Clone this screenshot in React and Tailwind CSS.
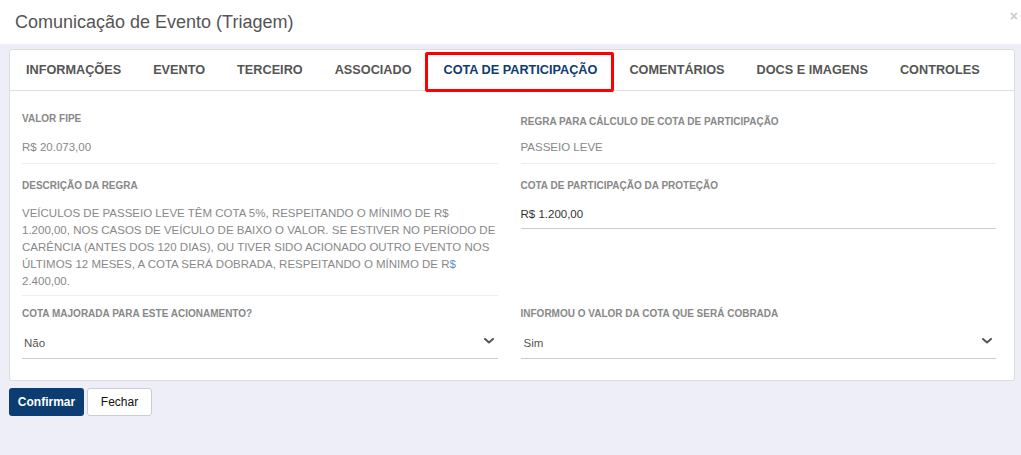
import React from "react";

const Chevron = () => (
  <svg width="10" height="6" viewBox="0 0 10 6" className="shrink-0">
    <path d="M1 1 L5 4.5 L9 1" fill="none" stroke="#555" strokeWidth="2" strokeLinecap="round" strokeLinejoin="round" />
  </svg>
);

const tabs = ["INFORMAÇÕES", "EVENTO", "TERCEIRO", "ASSOCIADO", "COTA DE PARTICIPAÇÃO", "COMENTÁRIOS", "DOCS E IMAGENS", "CONTROLES"];

const Label = ({ children, className = "" }) => (
  <div className={"text-[10px] leading-[12px] font-bold text-[#888] uppercase " + className}>{children}</div>
);

export default function App() {
  return (
    <div className="w-full h-[455px] bg-[#eeeef8] overflow-hidden" style={{ fontFamily: '"Liberation Sans", Arial, sans-serif' }}>
      <div className="relative h-[44px] bg-white flex items-center pl-[15px]">
        <span className="text-[18px] text-[#555] leading-none">Comunicação de Evento (Triagem)</span>
        <span className="absolute right-[3px] top-[6px] text-[14px] font-bold text-[#ccc]">×</span>
      </div>
      <div className="px-[9px] pt-[5px]">
        <div className="w-[1006px] bg-white border border-[#ddd] rounded-[3px]">
          <div className="h-[41px] border-b border-[#ddd] flex items-center">
            {tabs.map((t, i) => (
              <div key={t} className={"relative h-full flex items-center pt-[2px] px-[16px] text-[12.7px] font-bold " + (i === 4 ? "text-[#0d3b74]" : "text-[#555]")}>
                {t}
                {i === 4 && <div className="absolute left-[-3px] right-[-1px] top-[2px] bottom-[-2px] border-[3px] border-[#f00] rounded-[2px]" />}
              </div>
            ))}
          </div>
          <div className="grid grid-cols-2 gap-x-[23px] pl-[12px] pr-[18px]">
            {/* Row 1 */}
            <div className="pt-[22px]">
              <Label>Valor FIPE</Label>
              <div className="mt-[14px] text-[11.5px] leading-[17px] text-[#888] pb-[7px] border-b border-[#eee]">R$ 20.073,00</div>
            </div>
            <div className="pt-[25px]">
              <Label>Regra para cálculo de cota de participação</Label>
              <div className="mt-[11px] text-[11.5px] leading-[17px] text-[#888] pb-[7px] border-b border-[#eee]">PASSEIO LEVE</div>
            </div>
            {/* Row 2 */}
            <div className="pt-[16px]">
              <Label>Descrição da regra</Label>
              <div className="mt-[13px] text-[11.5px] leading-[17px] text-[#888] pb-[5px] border-b border-[#eee] whitespace-nowrap">
                VEÍCULOS DE PASSEIO LEVE TÊM COTA 5%, RESPEITANDO O MÍNIMO DE R$<br />
                1.200,00, NOS CASOS DE VEÍCULO DE BAIXO O VALOR. SE ESTIVER NO PERÍODO DE<br />
                CARÊNCIA (ANTES DOS 120 DIAS), OU TIVER SIDO ACIONADO OUTRO EVENTO NOS<br />
                ÚLTIMOS 12 MESES, A COTA SERÁ DOBRADA, RESPEITANDO O MÍNIMO DE R<span className="text-[#5b8fc9]">$</span><br />
                2.400,00.
              </div>
            </div>
            <div className="pt-[16px]">
              <Label>Cota de participação da proteção</Label>
              <div className="mt-[14px] text-[11.5px] leading-[17px] text-[#333] pb-[5px] border-b border-[#ccc]">R$ 1.200,00</div>
            </div>
            {/* Row 3 */}
            <div className="pt-[12px] pb-[21px]">
              <Label>Cota majorada para este acionamento?</Label>
              <div className="mt-[15px] flex items-center justify-between text-[11.5px] leading-[17px] text-[#555] pl-[2px] pr-[4px] pb-[6px] border-b border-[#ccc]">
                <span>Não</span>
                <span className="-mt-[6px]"><Chevron /></span>
              </div>
            </div>
            <div className="pt-[12px] pb-[21px]">
              <Label>Informou o valor da cota que será cobrada</Label>
              <div className="mt-[15px] flex items-center justify-between text-[11.5px] leading-[17px] text-[#555] pl-[3px] pr-[4px] pb-[6px] border-b border-[#ccc]">
                <span>Sim</span>
                <span className="-mt-[6px]"><Chevron /></span>
              </div>
            </div>
          </div>
        </div>
        <div className="flex gap-[3px] mt-[7px]">
          <button className="h-[28px] w-[75px] bg-[#0b3d73] text-white text-[12px] font-bold rounded-[3px]">Confirmar</button>
          <button className="h-[28px] w-[65px] bg-white text-[#111] text-[12px] border border-[#ccc] rounded-[3px]">Fechar</button>
        </div>
      </div>
    </div>
  );
}
